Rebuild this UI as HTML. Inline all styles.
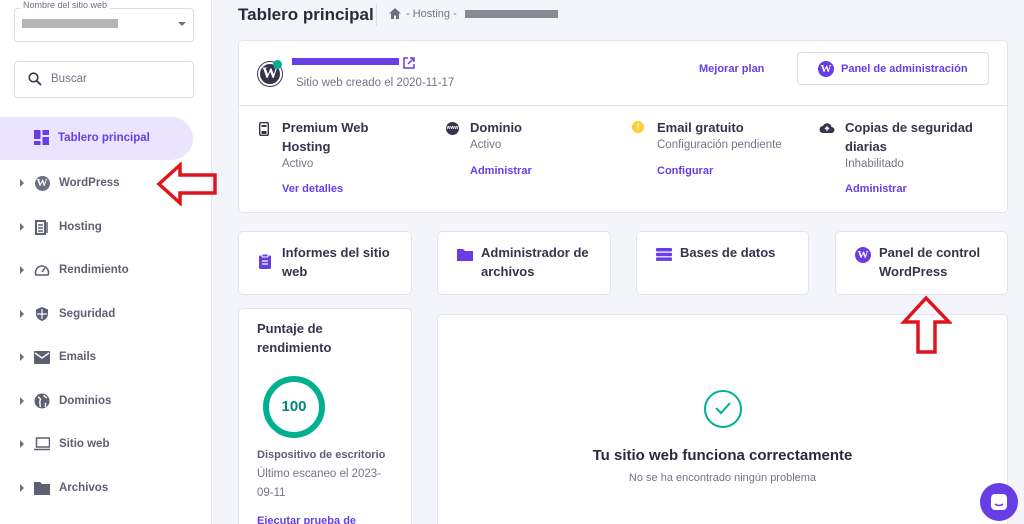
<!DOCTYPE html>
<html><head><meta charset="utf-8"><style>
*{box-sizing:border-box;margin:0;padding:0}
html,body{width:1024px;height:524px;overflow:hidden}
body{background:#f4f4fb;font-family:"Liberation Sans",sans-serif;color:#36344d;position:relative}
.abs{position:absolute}
.side{position:absolute;left:0;top:0;width:212px;height:524px;background:#fff;border-right:1px solid #e4e4ec}
.box{position:absolute;border:1px solid #dadce0;border-radius:4px;background:#fff}
.nav{position:absolute;left:20px;font-size:11.5px;font-weight:bold;color:#5d5f72;display:flex;align-items:center}
.nav .tri{width:0;height:0;border-left:4px solid #6d7081;border-top:4px solid transparent;border-bottom:4px solid transparent;margin-right:10px}
.nav .ic{width:16px;height:16px;margin-right:9px;display:flex;align-items:center;justify-content:center}
.card{position:absolute;background:#fff;border:1px solid #e3e3ee;border-radius:5px}
.h{font-size:13px;font-weight:bold;color:#36344d;line-height:19px}
.g{font-size:11.5px;color:#727586}
.p{font-size:11px;font-weight:bold;color:#673de6}
.wp{width:16px;height:16px;border-radius:50%;background:#673de6;color:#fff;font:bold 11px/16px "Liberation Serif",serif;text-align:center}
</style></head><body>
<div class="side">
  <div class="box" style="left:14px;top:8px;width:180px;height:34px"></div>
  <div class="abs" style="left:20px;top:0;background:#fff;padding:0 3px;font-size:9px;color:#6d7081">Nombre del sitio web</div>
  <div class="abs" style="left:22px;top:19px;width:96px;height:9px;background:#b5b5b5"></div>
  <div class="abs" style="left:178px;top:22px;border-top:4px solid #6d7081;border-left:4px solid transparent;border-right:4px solid transparent"></div>
  <div class="box" style="left:14px;top:61px;width:180px;height:37px"></div>
  <svg class="abs" style="left:28px;top:72px" width="14" height="14" viewBox="0 0 14 14"><circle cx="5.5" cy="5.5" r="4.3" fill="none" stroke="#36344d" stroke-width="1.6"/><path d="M8.7 8.7L13 13" stroke="#36344d" stroke-width="1.8"/></svg>
  <div class="abs" style="left:51px;top:73px;font-size:11.5px;color:#727586">Buscar</div>
  <div class="abs" style="left:0;top:117px;width:193px;height:43px;background:#ebe4ff;border-radius:0 22px 22px 0"></div>
  <svg class="abs" style="left:34px;top:130px" width="15" height="15" viewBox="0 0 15 15" fill="#673de6"><rect x="0" y="0" width="6.5" height="9"/><rect x="8.5" y="0" width="6.5" height="5"/><rect x="0" y="11" width="6.5" height="4"/><rect x="8.5" y="7" width="6.5" height="8"/></svg>
  <div class="abs" style="left:58px;top:132px;font-size:11.5px;font-weight:bold;color:#673de6">Tablero principal</div>
  <div class="nav" style="top:175px"><span class="tri"></span><span class="ic"><span class="wp" style="background:#6d7081;width:15px;height:15px;line-height:15px">W</span></span>WordPress</div>
  <div class="nav" style="top:219px"><span class="tri"></span><span class="ic"><svg width="14" height="15"><rect x="1" y="1" width="9" height="13" fill="none" stroke="#5d5f72" stroke-width="2"/><path d="M3 5h5M3 8h5M3 11h5M12 2v11" stroke="#5d5f72" stroke-width="1.5"/></svg></span>Hosting</div>
  <div class="nav" style="top:262px"><span class="tri"></span><span class="ic"><svg width="16" height="16"><path d="M2 13A6.5 6.5 0 1 1 14 13Z" fill="none" stroke="#5d5f72" stroke-width="1.6"/><path d="M8 10l3-4" stroke="#5d5f72" stroke-width="1.6"/></svg></span>Rendimiento</div>
  <div class="nav" style="top:306px"><span class="tri"></span><span class="ic"><svg width="14" height="16"><path d="M7 1L1 3.5V8c0 3.5 3 6 6 7 3-1 6-3.5 6-7V3.5Z" fill="#5d5f72"/><path d="M7 3v10M2 8h10" stroke="#fff" stroke-width="1.2"/></svg></span>Seguridad</div>
  <div class="nav" style="top:349px"><span class="tri"></span><span class="ic"><svg width="16" height="13"><rect x="0" y="0" width="16" height="13" rx="1" fill="#5d5f72"/><path d="M1 2l7 5 7-5" stroke="#fff" stroke-width="1.4" fill="none"/></svg></span>Emails</div>
  <div class="nav" style="top:393px"><span class="tri"></span><span class="ic"><svg width="16" height="16"><circle cx="8" cy="8" r="7.5" fill="#5d5f72"/><path d="M4 4c2 1 3 2 2 4s1 4 0 6M10 2c0 2 2 2 3 3M11 10c1 1 1 2 0 4" stroke="#fff" stroke-width="1.4" fill="none"/></svg></span>Dominios</div>
  <div class="nav" style="top:436px"><span class="tri"></span><span class="ic"><svg width="18" height="14"><rect x="2.5" y="1" width="13" height="9" fill="none" stroke="#5d5f72" stroke-width="1.5"/><path d="M0 12.5h18" stroke="#5d5f72" stroke-width="1.5"/></svg></span>Sitio web</div>
  <div class="nav" style="top:480px"><span class="tri"></span><span class="ic"><svg width="16" height="14"><path d="M0 1h6l2 2h8v11H0Z" fill="#5d5f72"/></svg></span>Archivos</div>
</div>
<svg class="abs" style="left:156px;top:162px" width="64" height="44"><path d="M3 22L24 3v10h35v18H24v10Z" fill="none" stroke="#e0141e" stroke-width="3.5"/></svg>
<div class="abs" style="left:238px;top:5px;font-size:17px;font-weight:bold;color:#2b2a3c">Tablero principal</div>
<div class="abs" style="left:376px;top:4px;width:1px;height:22px;background:#dadce0"></div>
<svg class="abs" style="left:389px;top:8px" width="12" height="11"><path d="M6 0L0 5.5h2V11h3V7.5h2V11h3V5.5h2Z" fill="#6d7081"/></svg>
<div class="abs" style="left:406px;top:8px;font-size:11px;color:#727586">- Hosting -</div>
<div class="abs" style="left:465px;top:10px;width:93px;height:8px;background:#8a8a96"></div>
<div class="card" style="left:238px;top:40px;width:770px;height:173px"></div>
<div class="abs" style="left:238px;top:105px;width:770px;height:1px;background:#e3e3ee"></div>
<div class="abs" style="left:258px;top:62px;width:24px;height:24px;border-radius:50%;background:#36344d;border:2px solid #fff;box-shadow:0 0 0 1px #36344d;color:#fff;font:bold 16px/20px 'Liberation Serif',serif;text-align:center">W</div>
<div class="abs" style="left:273px;top:60px;width:9px;height:9px;border-radius:50%;background:#00b090"></div>
<div class="abs" style="left:292px;top:58px;width:107px;height:7px;background:#673de6"></div>
<svg class="abs" style="left:403px;top:57px" width="12" height="12"><path d="M5 1H1v10h10V7M7 1h4v4M11 1L5 7" stroke="#673de6" stroke-width="1.5" fill="none"/></svg>
<div class="abs g" style="left:296px;top:77px">Sitio web creado el 2020-11-17</div>
<div class="abs p" style="left:699px;top:63px">Mejorar plan</div>
<div class="abs" style="left:797px;top:52px;width:192px;height:33px;border:1px solid #dadce0;border-radius:4px;background:#fff"></div>
<div class="abs wp" style="left:818px;top:61px">W</div>
<div class="abs p" style="left:841px;top:63px">Panel de administración</div>
<svg class="abs" style="left:259px;top:122px" width="10" height="14"><rect x="0.7" y="0.7" width="8.6" height="12.6" rx="1" fill="none" stroke="#36344d" stroke-width="1.4"/><rect x="2.5" y="3" width="5" height="2" fill="#36344d"/><rect x="2.5" y="9" width="5" height="3" fill="#36344d"/></svg>
<div class="abs h" style="left:282px;top:118px;width:120px">Premium Web Hosting</div>
<div class="abs g" style="left:282px;top:158px">Activo</div>
<div class="abs p" style="left:282px;top:183px">Ver detalles</div>
<div class="abs" style="left:446px;top:122px;width:13px;height:13px;border-radius:50%;background:#36344d;color:#fff;font-size:5px;line-height:13px;text-align:center;font-weight:bold">www</div>
<div class="abs h" style="left:470px;top:118px">Dominio</div>
<div class="abs g" style="left:470px;top:139px">Activo</div>
<div class="abs p" style="left:470px;top:165px">Administrar</div>
<div class="abs" style="left:632px;top:121px;width:12px;height:12px;border-radius:50%;background:#ffcd35;color:#fff;font:bold 9px/12px sans-serif;text-align:center">!</div>
<div class="abs h" style="left:657px;top:118px">Email gratuito</div>
<div class="abs g" style="left:657px;top:139px">Configuración pendiente</div>
<div class="abs p" style="left:657px;top:165px">Configurar</div>
<svg class="abs" style="left:819px;top:122px" width="16" height="12"><path d="M4 11a3.5 3.5 0 0 1 0-7 4.5 4.5 0 0 1 8.5 1A3 3 0 0 1 12.5 11Z" fill="#36344d"/><path d="M8 9V5M6 7l2-2 2 2" stroke="#fff" stroke-width="1.3" fill="none"/></svg>
<div class="abs h" style="left:845px;top:118px;width:140px">Copias de seguridad diarias</div>
<div class="abs g" style="left:845px;top:158px">Inhabilitado</div>
<div class="abs p" style="left:845px;top:183px">Administrar</div>
<div class="card" style="left:238px;top:231px;width:174px;height:64px"></div>
<svg class="abs" style="left:259px;top:254px" width="12" height="15"><rect x="0" y="1.5" width="12" height="13.5" rx="1.5" fill="#673de6"/><rect x="3" y="0" width="6" height="3" rx="1" fill="#673de6" stroke="#fff"/><path d="M3 7h6M3 10h6" stroke="#fff" stroke-width="1.3"/></svg>
<div class="abs h" style="left:282px;top:243px;width:120px">Informes del sitio web</div>
<div class="card" style="left:437px;top:231px;width:174px;height:64px"></div>
<svg class="abs" style="left:457px;top:248px" width="16" height="13"><path d="M0 1h6l2 2h8v10H0Z" fill="#673de6"/></svg>
<div class="abs h" style="left:481px;top:243px;width:120px">Administrador de archivos</div>
<div class="card" style="left:636px;top:231px;width:173px;height:64px"></div>
<svg class="abs" style="left:656px;top:248px" width="16" height="13"><rect x="0" y="0" width="16" height="3.5" rx="1" fill="#673de6"/><rect x="0" y="4.7" width="16" height="3.5" rx="1" fill="#673de6"/><rect x="0" y="9.4" width="16" height="3.5" rx="1" fill="#673de6"/></svg>
<div class="abs h" style="left:680px;top:243px">Bases de datos</div>
<div class="card" style="left:835px;top:231px;width:173px;height:64px"></div>
<div class="abs wp" style="left:855px;top:247px">W</div>
<div class="abs h" style="left:879px;top:243px;width:120px">Panel de control WordPress</div>
<div class="card" style="left:238px;top:308px;width:174px;height:230px"></div>
<div class="abs h" style="left:257px;top:319px;width:120px">Puntaje de rendimiento</div>
<div class="abs" style="left:263px;top:376px;width:62px;height:62px;border-radius:50%;border:6px solid #00b090;color:#008c74;font-size:15px;font-weight:bold;text-align:center;line-height:50px">100</div>
<div class="abs" style="left:257px;top:449px;font-size:11px;font-weight:bold;color:#5d5f72">Dispositivo de escritorio</div>
<div class="abs g" style="left:257px;top:465px;width:130px;line-height:19px">Último escaneo el 2023-09-11</div>
<div class="abs p" style="left:257px;top:515px">Ejecutar prueba de</div>
<div class="card" style="left:437px;top:314px;width:571px;height:230px"></div>
<div class="abs" style="left:704px;top:390px;width:38px;height:38px;border-radius:50%;border:2px solid #00b090"></div>
<svg class="abs" style="left:714px;top:401px" width="18" height="14"><path d="M2 7l5 5 9-10" stroke="#00b090" stroke-width="2" fill="none"/></svg>
<div class="abs" style="left:437px;top:447px;width:571px;text-align:center;font-size:15px;font-weight:bold;color:#2b2a3c">Tu sitio web funciona correctamente</div>
<div class="abs g" style="left:437px;top:472px;width:571px;text-align:center;font-size:11px">No se ha encontrado ningún problema</div>
<svg class="abs" style="left:900px;top:295px" width="52" height="66"><path d="M26 3L4 27h14v30h17V27h14Z" fill="none" stroke="#e0141e" stroke-width="3.5"/></svg>
<div class="abs" style="left:980px;top:483px;width:38px;height:38px;border-radius:50%;background:#673de6"></div>
<svg class="abs" style="left:989px;top:492px" width="20" height="20"><rect x="2" y="2" width="16" height="16" rx="4" fill="#fff"/><path d="M6 12q4 3 8 0" stroke="#673de6" stroke-width="1.5" fill="none"/></svg>
</body></html>
